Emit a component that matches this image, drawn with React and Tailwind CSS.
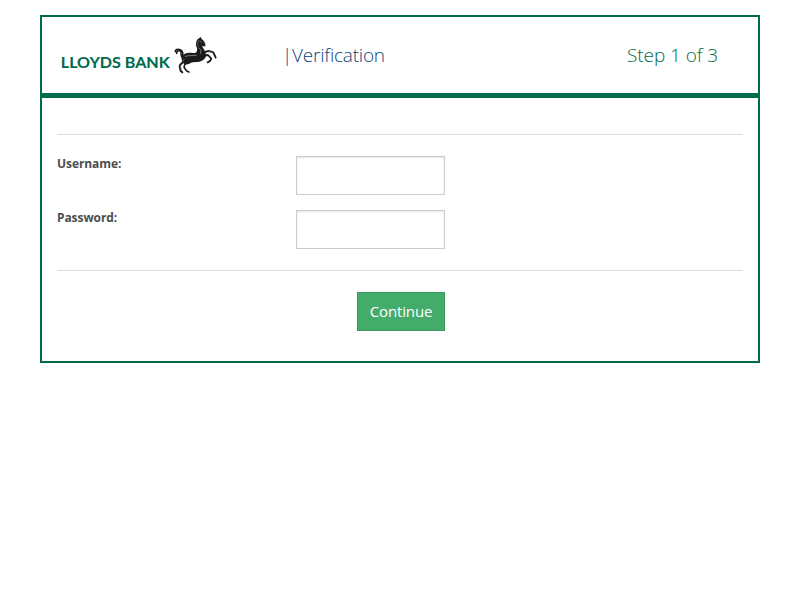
const horse = '#1c1a1b';

function Logo() {
  return (
    <svg className="h-[46px] w-[165px] shrink-0" viewBox="0 0 165 46" role="img" aria-label="Lloyds Bank">
      <text
        x="5.8"
        y="36"
        fill="#006a4d"
        stroke="#006a4d"
        strokeWidth="0.1"
        fontSize="15.2"
        fontWeight="700"
        textLength="109"
        lengthAdjust="spacingAndGlyphs"
        className="font-['Lato',sans-serif]"
      >
        LLOYDS BANK
      </text>
      <g transform="translate(115 0) scale(0.33333)" fill="none" stroke={horse} strokeLinecap="round" strokeLinejoin="round">
        <path
          fill={horse}
          stroke="none"
          d="M37 73 C44 60 58 62 68 63 C76 64 80 61 81 56 C82 50 81 46 78 41 C77 29 81 21 88 18 L92 15 L95 21 C102 25 105 32 107 40 L102 44 L98 41 L97 44 C101 52 107 57 108 67 C109 80 99 87 88 89 C77 91 67 88 58 95 C49 100 40 97 37 89 C34 82 34 78 37 73Z"
        />
        <path d="M38 77 C30 74 36 63 31 58 C26 54 20 58 20 64 M38 72 C41 61 34 52 26 53 M30 55 C23 49 16 53 16 59" strokeWidth="5" />
        <path d="M40 88 C37 95 28 97 29 103 L32 117 L37 121" strokeWidth="6" />
        <path d="M48 92 C43 99 40 104 44 109 L51 118 L57 120" strokeWidth="5" />
        <path d="M99 72 L114 69 L124 80 L120 87 L113 91" strokeWidth="5.5" />
        <path d="M100 61 L116 57 L130 61 L135 72 L137 77" strokeWidth="5.5" />
        <path d="M87 25 C82 31 81 37 84 42 M91 28 L95 31" stroke="#999" strokeWidth="1.8" />
        <path d="M46 73 C56 69 69 72 79 70 M87 48 C94 52 94 60 91 65" stroke="#999" strokeWidth="2.4" />
        <path d="M42 80 L40 88 M31 102 L33 110 M116 58 L125 62 M24 57 C29 57 33 62 34 66" stroke="#999" strokeWidth="1.5" />
      </g>
    </svg>
  );
}

function Field({ label, type }) {
  return (
    <label className="flex h-[39px] items-start">
      <span className="w-[239px] text-[12px] leading-4 font-bold tracking-[-0.08px] text-[#4d4d4d]">{label}</span>
      <input
        type={type}
        className="h-[39px] w-[149px] border border-[#cccccc] bg-white px-3 text-[15px] shadow-[inset_0_1px_2px_rgba(0,0,0,0.1)] outline-none"
      />
    </label>
  );
}

export default function App() {
  return (
    <div className="min-h-[600px] bg-white pt-[15px] font-['Open_Sans',sans-serif]">
      <main className="mx-auto h-[348px] w-[720px] border-2 border-[#006a4d]">
        <header className="flex h-[81px] items-start border-b-5 border-[#006a4d] pt-[15px] pr-10 pl-[13px]">
          <Logo />
          <h1 className="mt-[9px] ml-[62px] text-[19px] leading-[28px] font-light tracking-[-0.2px] text-[#0b3f7a]">|Verification</h1>
          <p className="mt-[9px] ml-auto text-[19px] leading-[28px] font-light tracking-[-0.08px] text-[#006a4d]">Step 1 of 3</p>
        </header>
        <div className="px-[15px] pt-[36px]">
          <div className="flex h-[137px] flex-col gap-[15px] border-y border-[#dddddd] pt-[21px]">
            <Field label="Username:" type="text" />
            <Field label="Password:" type="password" />
          </div>
          <button
            type="button"
            className="mt-[21px] ml-[300px] block h-[39px] w-[88px] border border-[#3a9a5c] bg-[#43ac6a] text-center text-[15px] leading-[21px] tracking-[-0.15px] text-white"
          >
            Continue
          </button>
        </div>
      </main>
    </div>
  );
}
